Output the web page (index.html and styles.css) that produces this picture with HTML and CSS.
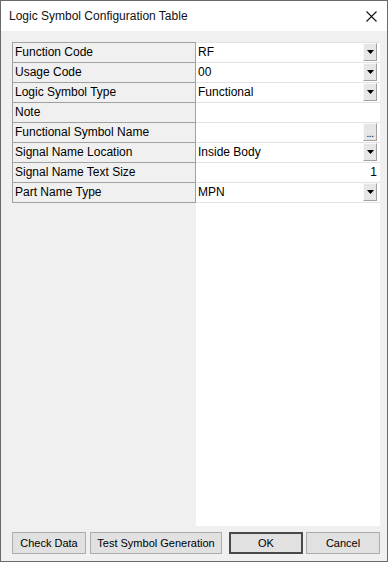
FILE: index.html
```html
<!DOCTYPE html>
<html lang="en">
<head>
<meta charset="UTF-8">
<meta name="viewport" content="width=device-width, initial-scale=1.0">
<title>Logic Symbol Configuration Table</title>
<link rel="stylesheet" href="styles.css">
</head>
<body>

<div class="window">
  <!-- Title bar -->
  <div class="titlebar">
    <span class="title">Logic Symbol Configuration Table</span>
    <svg class="close" width="11" height="11" viewBox="0 0 11 11">
      <path d="M0.5 0.5 L10.5 10.5 M10.5 0.5 L0.5 10.5" stroke="#111" stroke-width="1.1" fill="none"/>
    </svg>
  </div>

  <div class="content">
    <!-- Property grid -->
    <div class="grid">
      <div class="labels">
        <div class="label">Function Code</div>
        <div class="label">Usage Code</div>
        <div class="label">Logic Symbol Type</div>
        <div class="label">Note</div>
        <div class="label">Functional Symbol Name</div>
        <div class="label">Signal Name Location</div>
        <div class="label">Signal Name Text Size</div>
        <div class="label last">Part Name Type</div>
      </div>
      <div class="values">
        <div class="value"><span class="text">RF</span><span class="drop"><svg width="7" height="4" viewBox="0 0 7 4"><polygon points="0,0 7,0 3.5,4" fill="#000"/></svg></span></div>
        <div class="value"><span class="text">00</span><span class="drop"><svg width="7" height="4" viewBox="0 0 7 4"><polygon points="0,0 7,0 3.5,4" fill="#000"/></svg></span></div>
        <div class="value"><span class="text">Functional</span><span class="drop"><svg width="7" height="4" viewBox="0 0 7 4"><polygon points="0,0 7,0 3.5,4" fill="#000"/></svg></span></div>
        <div class="value"><span class="text"></span></div>
        <div class="value"><span class="text"></span><span class="drop dots">...</span></div>
        <div class="value"><span class="text">Inside Body</span><span class="drop"><svg width="7" height="4" viewBox="0 0 7 4"><polygon points="0,0 7,0 3.5,4" fill="#000"/></svg></span></div>
        <div class="value"><span class="text number">1</span></div>
        <div class="value last"><span class="text">MPN</span><span class="drop"><svg width="7" height="4" viewBox="0 0 7 4"><polygon points="0,0 7,0 3.5,4" fill="#000"/></svg></span></div>
      </div>
    </div>

    <!-- Dialog buttons -->
    <div class="buttons">
      <button type="button" class="button check">Check Data</button>
      <button type="button" class="button test">Test Symbol Generation</button>
      <button type="button" class="button ok">OK</button>
      <button type="button" class="button cancel">Cancel</button>
    </div>
  </div>
</div>

</body>
</html>
```

FILE: styles.css
```css
body {
  margin: 0;
  padding: 0;
  font-family: "Liberation Sans", Arial, sans-serif;
  font-size: 12px;
  color: #000;
}
.window {
  width: 388px;
  height: 562px;
  box-sizing: border-box;
  border: 1px solid #6a6a6a;
  display: flex;
  flex-direction: column;
  background-color: #f0f0f0;
}
.titlebar {
  height: 30px;
  background-color: #fff;
  display: flex;
  align-items: center;
  padding: 0 10px 0 8px;
}
.title {
  flex-grow: 1;
  font-size: 12px;
  color: #111;
}
.close {
  margin-top: 1px;
}
.content {
  flex-grow: 1;
  display: flex;
  flex-direction: column;
  padding: 11px 7px 7px 11px;
}
.grid {
  flex-grow: 1;
  display: flex;
}
.labels {
  width: 184px;
  box-sizing: border-box;
  border-left: 1px solid #a0a0a0;
  border-right: 1px solid #a0a0a0;
  align-self: flex-start;
}
.label {
  height: 19px;
  line-height: 19px;
  border-top: 1px solid #a0a0a0;
  padding-left: 2px;
  white-space: nowrap;
}
.label.last {
  border-bottom: 1px solid #a0a0a0;
}
.values {
  flex-grow: 1;
  background-color: #fff;
}
.value {
  height: 19px;
  border-top: 1px solid #e3e3e3;
  display: flex;
  align-items: center;
}
.value.last {
  border-bottom: 1px solid #e3e3e3;
}
.text {
  flex-grow: 1;
  padding-left: 2px;
  line-height: 19px;
}
.number {
  text-align: right;
  padding-right: 3px;
}
.drop {
  width: 12px;
  height: 16px;
  margin-right: 3px;
  background-color: #e6e6e6;
  border-top: 1px solid #f8f8f8;
  border-left: 1px solid #f8f8f8;
  border-right: 1px solid #a0a0a0;
  border-bottom: 1px solid #a0a0a0;
  display: flex;
  align-items: center;
  justify-content: center;
  margin-top: -1px;
}
.dots {
  font-size: 10px;
  line-height: 12px;
  align-items: flex-end;
  letter-spacing: -0.5px;
}
.buttons {
  display: flex;
  margin-top: 6px;
  height: 22px;
}
.button {
  font-family: "Liberation Sans", Arial, sans-serif;
  font-size: 11px;
  color: #000;
  background-color: #e1e1e1;
  border: 1px solid #adadad;
  padding: 0;
  margin: 0;
  height: 22px;
  width: 74px;
}
.test {
  width: 132px;
  margin-left: 4px;
}
.ok {
  margin-left: 7px;
  border: 2px solid #4a4a4a;
}
.cancel {
  margin-left: 3px;
}
```
